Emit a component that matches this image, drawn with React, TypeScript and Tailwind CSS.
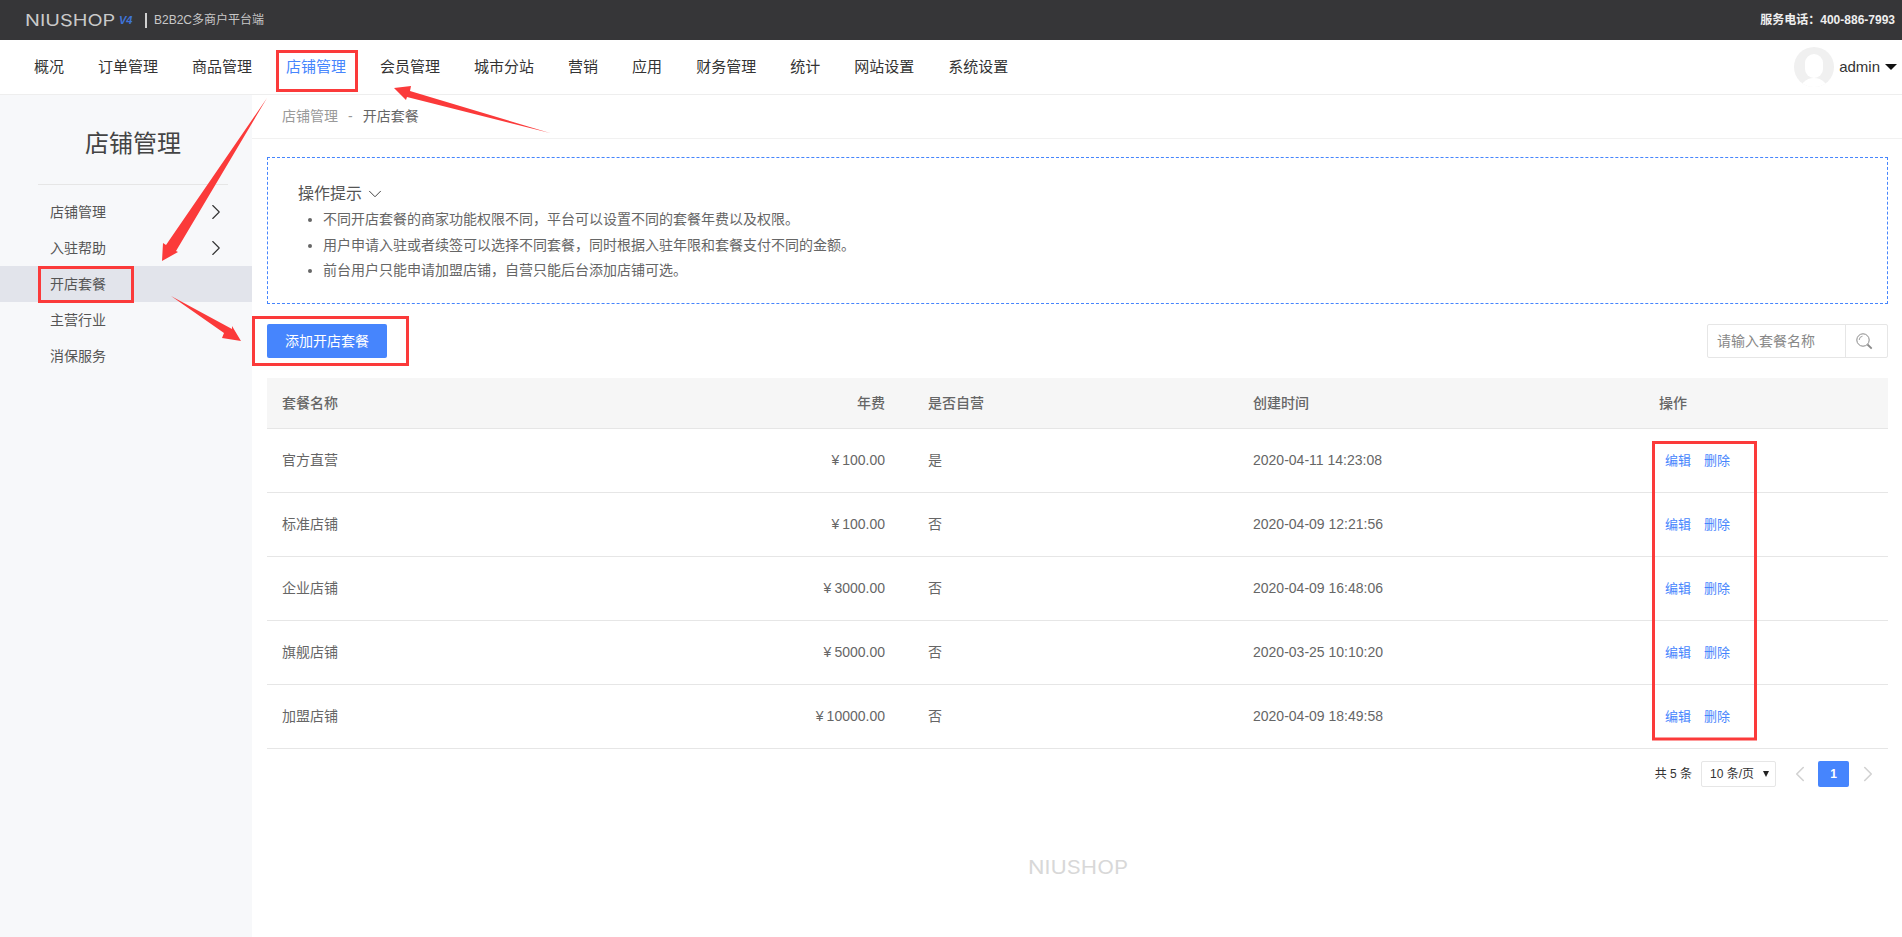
import React from 'react';
import { ChevronDown, ChevronRight, ChevronLeft } from 'lucide-react';

const navItems = ['概况', '订单管理', '商品管理', '店铺管理', '会员管理', '城市分站', '营销', '应用', '财务管理', '统计', '网站设置', '系统设置'];

const sideItems = [
  { label: '店铺管理', arrow: true },
  { label: '入驻帮助', arrow: true },
  { label: '开店套餐', active: true },
  { label: '主营行业' },
  { label: '消保服务' },
];

const tips = [
  '不同开店套餐的商家功能权限不同\uFF0C平台可以设置不同的套餐年费以及权限。',
  '用户申请入驻或者续签可以选择不同套餐\uFF0C同时根据入驻年限和套餐支付不同的金额。',
  '前台用户只能申请加盟店铺\uFF0C自营只能后台添加店铺可选。',
];

const rows = [
  { name: '官方直营', fee: '100.00', self: '是', time: '2020-04-11 14:23:08' },
  { name: '标准店铺', fee: '100.00', self: '否', time: '2020-04-09 12:21:56' },
  { name: '企业店铺', fee: '3000.00', self: '否', time: '2020-04-09 16:48:06' },
  { name: '旗舰店铺', fee: '5000.00', self: '否', time: '2020-03-25 10:10:20' },
  { name: '加盟店铺', fee: '10000.00', self: '否', time: '2020-04-09 18:49:58' },
];

const cols = 'grid grid-cols-[323px_323px_325px_406px_244px] items-center';

// red marks drawn on top of the screenshot
const Annotations = () => (
  <svg className="absolute inset-0 pointer-events-none" width="1902" height="937" viewBox="0 0 1902 937">
    <g fill="none" stroke="#fb3a3a" strokeWidth="3">
      <rect x="277.5" y="51.5" width="79" height="39" />
      <rect x="39.5" y="267.5" width="93" height="34" />
      <rect x="253.5" y="317.5" width="154" height="47" />
      <rect x="1653.5" y="442.5" width="102" height="296.5" />
    </g>
    <g fill="#fb3a3a">
      <polygon points="394,88 411,86 410,91 550,133 407,97 406,100" />
      <polygon points="162,261 163,243 166,245 267,98 176,251 178,252" />
      <polygon points="241,341 222,338 224,333 171,296 232,329 232,326" />
    </g>
  </svg>
);

const SearchGlyph = () => (
  <svg width="17" height="17" viewBox="0 0 17 17" fill="none" stroke="#8a8a8a">
    <circle cx="7" cy="7" r="6.2" strokeWidth="1" />
    <path d="M6.5 3.2A3.8 3.8 0 0 0 3.2 7" strokeWidth="0.8" />
    <path d="M11.5 11.5L15.7 15.7" strokeWidth="1.8" />
  </svg>
);

export default function App() {
  return (
    <div className="relative h-screen overflow-hidden bg-white font-['Liberation_Sans','Noto_Sans_CJK_SC',sans-serif] text-[14px] text-[#666]">
      {/* top bar */}
      <div className="h-[40px] bg-[#363638] flex items-center justify-between pl-[25px] pr-[7px]">
        <div className="flex items-center">
          <span className="w-[90px] origin-left scale-x-[1.2] font-['Inter',sans-serif] text-[16.5px] leading-none whitespace-nowrap text-[#c9c9c9]">NIUSHOP</span>
          <span className="ml-[4px] text-[11px] font-bold italic leading-none text-[#3f74d8]">V4</span>
          <span className="ml-[13px] h-[15px] w-[1.5px] bg-[#d0d0d0]"></span>
          <span className="ml-[7px] text-[12px] text-[#c8c8c8]">B2B2C多商户平台端</span>
        </div>
        <span className="text-[12px] font-bold text-[#eee]">{'服务电话\uFF1A400-886-7993'}</span>
      </div>

      {/* main nav */}
      <div className="h-[55px] border-b border-[#eeeeee] flex items-center justify-between pl-[34px] pr-[5px]">
        <div className="flex items-center gap-[34px] text-[15px] text-[#333]">
          {navItems.map(item => (
            <span key={item} className={item === '店铺管理' ? 'text-[#4685fd]' : ''}>{item}</span>
          ))}
        </div>
        <div className="flex items-center">
          <div className="relative w-[40px] h-[40px] rounded-full bg-[#f0f0f0] overflow-hidden">
            <div className="absolute left-[11px] top-[7px] w-[18px] h-[24px] rounded-full bg-white"></div>
            <div className="absolute left-[5px] top-[31px] w-[30px] h-[16px] rounded-t-full bg-white"></div>
          </div>
          <span className="ml-[5px] text-[15px] text-[#333]">admin</span>
          <span className="ml-[5px] w-0 h-0 border-x-[6px] border-x-transparent border-t-[6px] border-t-[#111]"></span>
        </div>
      </div>

      <div className="flex h-[842px]">
        {/* sidebar */}
        <div className="w-[252px] shrink-0 bg-[#f7f8fa]">
          <div className="ml-[38px] w-[190px] h-[90px] pt-[9px] border-b border-[#e6e6e6] flex items-center justify-center text-[24px] text-[#444]">
            店铺管理
          </div>
          <div className="pt-[9px]">
            {sideItems.map(item => (
              <div key={item.label} className={`h-[36px] pl-[50px] pr-[23px] flex items-center justify-between ${item.active ? 'bg-[#e2e4eb]' : ''}`}>
                <span className="text-[#555]">{item.label}</span>
                {item.arrow && <ChevronRight size={26} strokeWidth={1} className="text-[#333]" />}
              </div>
            ))}
          </div>
        </div>

        {/* content */}
        <div className="flex-1 min-w-0">
          <div className="h-[44px] border-b border-[#f1f1f1] flex items-center pl-[30px]">
            <span className="text-[#999]">店铺管理</span>
            <span className="mx-[10px] text-[#999]">-</span>
            <span className="text-[#666]">开店套餐</span>
          </div>

          <div className="pl-[15px] pr-[14px]">
            <div className="mt-[18px] h-[147px] border border-dashed border-[#4685fd] pl-[30px] pt-[24px]">
              <div className="flex items-center text-[16px] leading-[24px] text-[#555]">
                操作提示
                <ChevronDown size={22} strokeWidth={1} className="ml-[2px] text-[#333]" />
              </div>
              <ul className="list-disc pl-[25px] text-[14px] leading-[25.5px] text-[#666] mt-[1px]">
                {tips.map(tip => <li key={tip}>{tip}</li>)}
              </ul>
            </div>

            <div className="mt-[20px] flex items-center justify-between">
              <button className="w-[120px] h-[34px] rounded-[2px] bg-[#4685fd] text-white text-[14px]">添加开店套餐</button>
              <div className="w-[181px] h-[34px] border border-[#e6e6e6] rounded-[2px] flex items-center">
                <span className="flex-1 pl-[9px] text-[#888]">请输入套餐名称</span>
                <span className="w-[42px] h-full border-l border-[#e6e6e6] flex items-center pl-[10px]">
                  <SearchGlyph />
                </span>
              </div>
            </div>

            {/* table */}
            <div className="mt-[20px]">
              <div className={`${cols} h-[51px] bg-[#f6f6f6] border-b border-[#e6e6e6] font-medium text-[#666]`}>
                <div className="pl-[15px]">套餐名称</div>
                <div className="pr-[28px] text-right">年费</div>
                <div className="pl-[15px]">是否自营</div>
                <div className="pl-[15px]">创建时间</div>
                <div className="pl-[15px]">操作</div>
              </div>
              {rows.map(row => (
                <div key={row.name} className={`${cols} h-[64px] border-b border-[#e6e6e6] text-[#666]`}>
                  <div className="pl-[15px]">{row.name}</div>
                  <div className="pr-[28px] text-right"><span className="mr-[3px]">¥</span>{row.fee}</div>
                  <div className="pl-[15px]">{row.self}</div>
                  <div className="pl-[15px]">{row.time}</div>
                  <div className="pl-[21px] flex gap-[13px] text-[13px] text-[#4685fd]">
                    <span>编辑</span>
                    <span>删除</span>
                  </div>
                </div>
              ))}
            </div>

            {/* pagination */}
            <div className="mt-[12px] flex items-center justify-end text-[12px] text-[#333]">
              <span>共 5 条</span>
              <div className="ml-[9px] w-[75px] h-[26px] border border-[#e6e6e6] rounded-[2px] flex items-center justify-between pl-[8px] pr-[6px]">
                <span>10 条/页</span>
                <span className="w-0 h-0 border-x-[3.5px] border-x-transparent border-t-[6px] border-t-[#222]"></span>
              </div>
              <ChevronLeft size={26} strokeWidth={1.5} className="ml-[11px] text-[#d2d2d2]" />
              <span className="ml-[5px] w-[31px] h-[26px] rounded-[2px] bg-[#4685fd] text-white font-bold flex items-center justify-center">1</span>
              <ChevronRight size={26} strokeWidth={1.5} className="ml-[6px] mr-[7px] text-[#d2d2d2]" />
            </div>

            {/* footer logo */}
            <div className="mt-[72px] flex justify-center">
              <span className="w-[100px] origin-left scale-x-[1.22] font-['Inter',sans-serif] text-[18px] leading-none whitespace-nowrap text-[#d8d8d8]">NIUSHOP</span>
            </div>
          </div>
        </div>
      </div>

      <Annotations />
    </div>
  );
}
